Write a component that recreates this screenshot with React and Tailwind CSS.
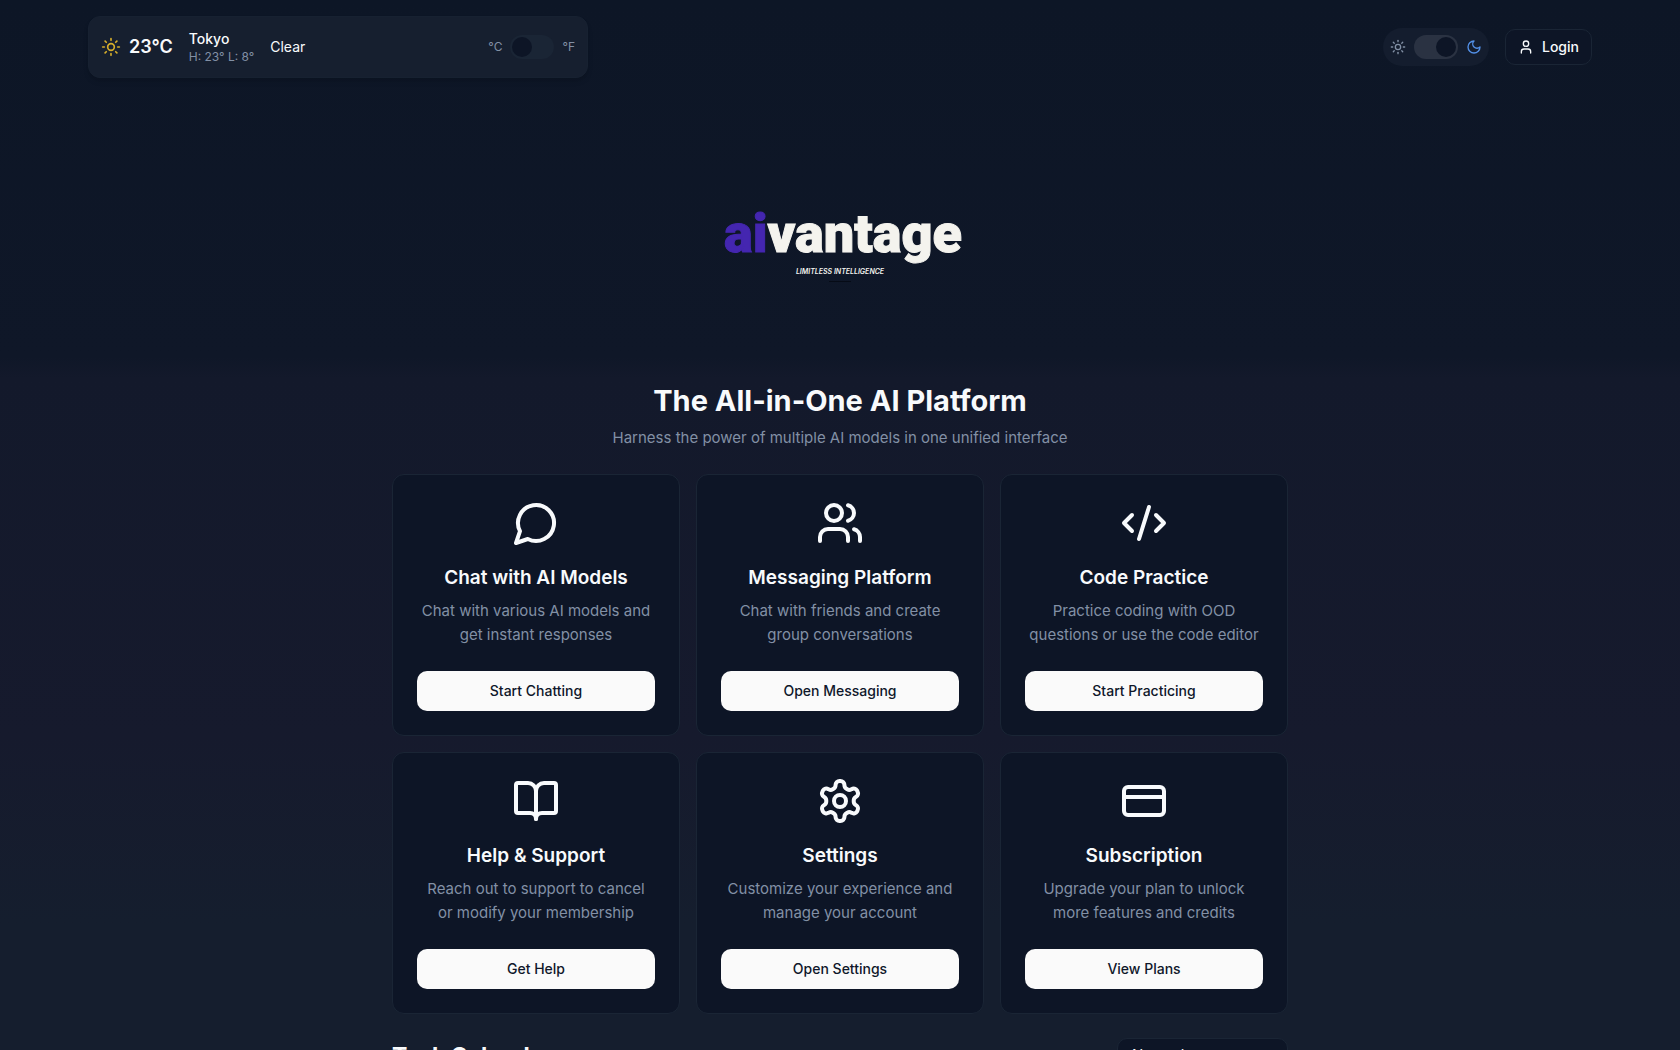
import React, { useState } from 'react';
import { BookOpen, CodeXml, CreditCard, Sun, User, Users } from 'lucide-react';

function LineIcon({ size = 24, className, children }) {
    return (
        <svg
            width={size}
            height={size}
            viewBox="0 0 24 24"
            fill="none"
            stroke="currentColor"
            strokeWidth="2"
            strokeLinecap="round"
            strokeLinejoin="round"
            aria-hidden="true"
            className={className}
        >
            {children}
        </svg>
    );
}

const ChatIcon = (props) => (
    <LineIcon {...props}>
        <path d="M7.9 20A9 9 0 1 0 4 16.1L2 22Z" />
    </LineIcon>
);

const GearIcon = (props) => (
    <LineIcon {...props}>
        <path d="M12.22 2h-.44a2 2 0 0 0-2 2v.18a2 2 0 0 1-1 1.73l-.43.25a2 2 0 0 1-2 0l-.15-.08a2 2 0 0 0-2.73.73l-.22.38a2 2 0 0 0 .73 2.73l.15.1a2 2 0 0 1 1 1.72v.51a2 2 0 0 1-1 1.74l-.15.09a2 2 0 0 0-.73 2.73l.22.38a2 2 0 0 0 2.73.73l.15-.08a2 2 0 0 1 2 0l.43.25a2 2 0 0 1 1 1.73V20a2 2 0 0 0 2 2h.44a2 2 0 0 0 2-2v-.18a2 2 0 0 1 1-1.73l.43-.25a2 2 0 0 1 2 0l.15.08a2 2 0 0 0 2.73-.73l.22-.39a2 2 0 0 0-.73-2.73l-.15-.08a2 2 0 0 1-1-1.74v-.5a2 2 0 0 1 1-1.74l.15-.09a2 2 0 0 0 .73-2.73l-.22-.38a2 2 0 0 0-2.73-.73l-.15.08a2 2 0 0 1-2 0l-.43-.25a2 2 0 0 1-1-1.73V4a2 2 0 0 0-2-2z" />
        <circle cx="12" cy="12" r="3" />
    </LineIcon>
);

const MoonIcon = (props) => (
    <LineIcon {...props}>
        <path d="M12 3a6 6 0 0 0 9 9 9 9 0 1 1-9-9Z" />
    </LineIcon>
);

const features = [
    {
        icon: ChatIcon,
        title: 'Chat with AI Models',
        text: 'Chat with various AI models and get instant responses',
        action: 'Start Chatting',
    },
    {
        icon: Users,
        title: 'Messaging Platform',
        text: 'Chat with friends and create group conversations',
        action: 'Open Messaging',
    },
    {
        icon: CodeXml,
        title: 'Code Practice',
        text: 'Practice coding with OOD questions or use the code editor',
        action: 'Start Practicing',
    },
    {
        icon: BookOpen,
        title: 'Help & Support',
        text: 'Reach out to support to cancel or modify your membership',
        action: 'Get Help',
    },
    {
        icon: GearIcon,
        title: 'Settings',
        text: 'Customize your experience and manage your account',
        action: 'Open Settings',
    },
    {
        icon: CreditCard,
        title: 'Subscription',
        text: 'Upgrade your plan to unlock more features and credits',
        action: 'View Plans',
    },
];

function Toggle({ label, checked, onChange, trackClass }) {
    return (
        <input
            type="checkbox"
            role="switch"
            aria-label={label}
            checked={checked}
            onChange={(e) => onChange(e.target.checked)}
            className={`h-6 w-11 shrink-0 cursor-pointer appearance-none rounded-full p-0.5 before:block before:size-5 before:rounded-full before:bg-[#0d1526] before:transition-transform checked:before:translate-x-5 ${trackClass}`}
        />
    );
}

function Weather() {
    const [fahrenheit, setFahrenheit] = useState(false);

    return (
        <section className="flex w-[500px] items-center justify-between rounded-xl border border-[#172131] bg-[#161f2f] p-3 shadow-md">
            <div className="flex items-center gap-4">
                <div className="flex items-center gap-2">
                    <Sun size={20} className="text-[#d6ae2b]" />
                    <span className="text-lg font-semibold">{fahrenheit ? '73°F' : '23°C'}</span>
                </div>
                <div className="flex flex-col">
                    <span className="text-sm font-medium">Tokyo</span>
                    <span className="text-xs text-[#8290a5]">H: 23° L: 8°</span>
                </div>
                <span className="text-sm">Clear</span>
            </div>
            <div className="flex items-center gap-2 text-xs text-[#8290a5]">
                <span>°C</span>
                <Toggle
                    label="Show Fahrenheit"
                    checked={fahrenheit}
                    onChange={setFahrenheit}
                    trackClass="bg-[#1a2535]"
                />
                <span>°F</span>
            </div>
        </section>
    );
}

function Logo() {
    return (
        <svg
            viewBox="0 0 256 96"
            role="img"
            aria-label="aivantage"
            className="h-24 w-64"
            fontFamily="Roboto, 'Liberation Sans', sans-serif"
        >
            <text
                x="131"
                y="54"
                textAnchor="middle"
                fontSize="54"
                fontWeight="900"
                fill="#f4f3ee"
                stroke="#f4f3ee"
                strokeWidth="1"
            >
                <tspan fill="#4426b0" stroke="#4426b0">ai</tspan>vantage
            </text>
            <text
                x="128"
                y="76"
                textAnchor="middle"
                fontFamily="Inter, sans-serif"
                fontSize="7"
                fontWeight="600"
                fontStyle="italic"
                fill="#f4f3ee"
            >
                LIMITLESS INTELLIGENCE
            </text>
            <path d="M117 83.5h22" stroke="#060b16" strokeWidth="1" />
        </svg>
    );
}

function FeatureCard({ icon: Icon, title, text, action }) {
    return (
        <article className="flex flex-col items-center rounded-xl border border-[#1a2535] bg-[#0d1526] p-6 text-center">
            <Icon size={48} className="text-[#f8fafc]" />
            <h2 className="mt-4 text-[19px] leading-[30px] font-semibold">{title}</h2>
            <p className="mt-1.5 px-0.5 text-[15px] leading-6 text-[#8290a5]">{text}</p>
            <button
                type="button"
                className="mt-6 h-10 w-full rounded-[10px] bg-[#fafafa] text-sm font-medium text-[#0f172a] hover:bg-white"
            >
                {action}
            </button>
        </article>
    );
}

export default function App() {
    const [dark, setDark] = useState(true);

    return (
        <div className="h-screen overflow-hidden bg-[linear-gradient(#0d1626,#0f1728_34%,#13192b_36%,#161a2d_70%,#151e2e_88%)] font-[Inter,sans-serif] text-[#f8fafc]">
            <header className="mx-auto flex max-w-screen-2xl items-center justify-between px-4 pt-4">
                <Weather />
                <div className="flex items-center gap-4">
                    <div className="flex items-center gap-2 rounded-full bg-[#141d2e] p-[7px]">
                        <Sun size={16} className="text-[#8290a5]" />
                        <Toggle
                            label="Dark mode"
                            checked={dark}
                            onChange={setDark}
                            trackClass="bg-[#2a3242]"
                        />
                        <MoonIcon size={16} className="text-[#5290e8]" />
                    </div>
                    <button
                        type="button"
                        className="flex h-9 items-center gap-2 rounded-[10px] border border-[#1a2535] bg-[#0d1526] px-3 text-sm font-medium"
                    >
                        <User size={16} />
                        Login
                    </button>
                </div>
            </header>

            <div className="flex justify-center pt-30 pb-22">
                <Logo />
            </div>

            <main className="mx-auto max-w-4xl">
                <div className="text-center">
                    <h1 className="text-[29px] leading-[38px] font-bold">The All-in-One AI Platform</h1>
                    <p className="mt-1.5 text-[15px] leading-6 text-[#8290a5]">
                        Harness the power of multiple AI models in one unified interface
                    </p>
                </div>

                <div className="mt-6 grid grid-cols-3 gap-4">
                    {features.map((feature) => (
                        <FeatureCard key={feature.title} {...feature} />
                    ))}
                </div>

                <section className="mt-6 flex items-center justify-between">
                    <h2 className="text-[23px] leading-8 font-bold">Task Calendar</h2>
                    <select
                        aria-label="Sort tasks"
                        className="h-9 w-[171px] appearance-none rounded-[10px] border border-[#1a2535] bg-[#0d1526] px-3.5 pb-0.5 text-[15px]"
                    >
                        <option>Newest</option>
                    </select>
                </section>
            </main>
        </div>
    );
}
